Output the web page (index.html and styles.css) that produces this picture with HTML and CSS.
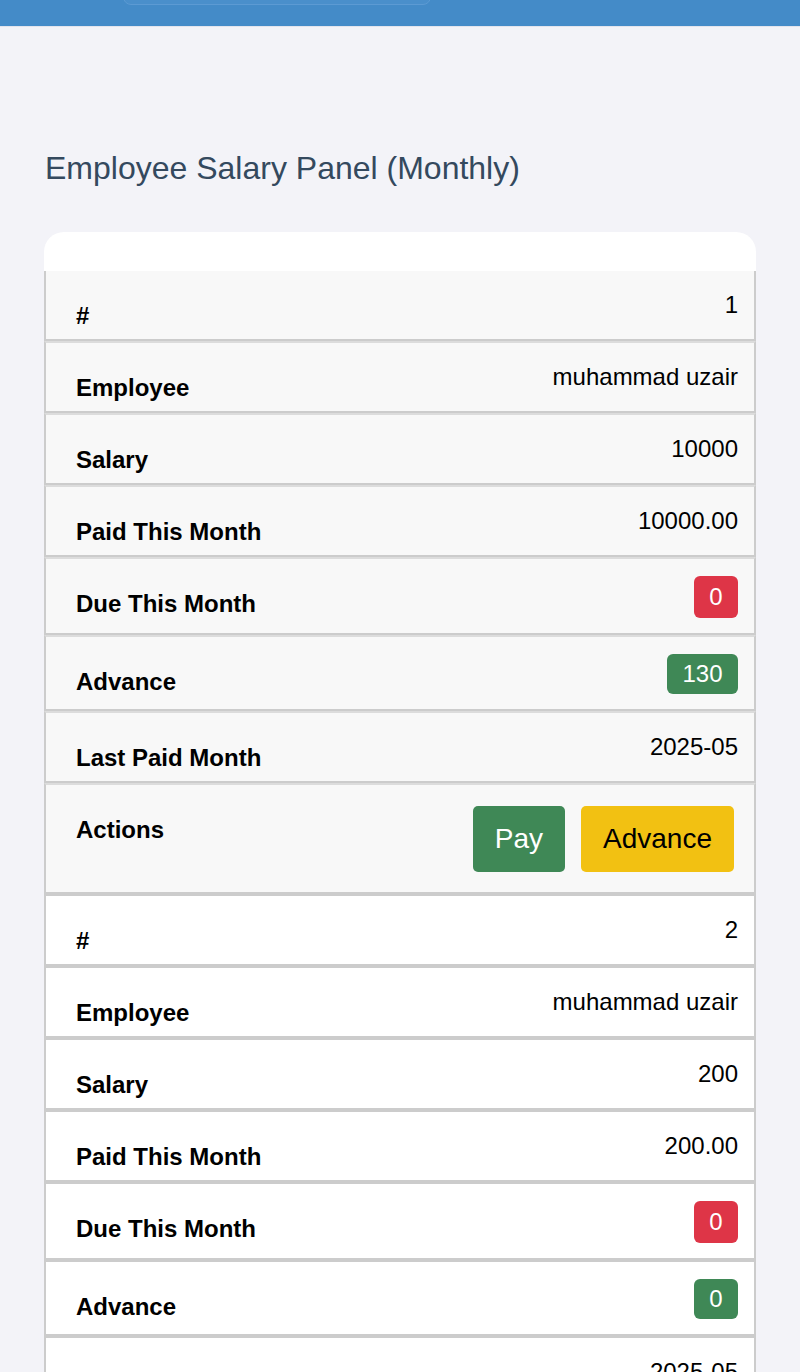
FILE: index.html
```html
<!DOCTYPE html>
<html lang="en">
<head>
<meta charset="utf-8">
<title>Employee Salary Panel</title>
<link rel="stylesheet" href="styles.css">
</head>
<body>
<header class="topbar">
  <div class="search"></div>
</header>
<main class="page">
  <h2 class="title">Employee Salary Panel (Monthly)</h2>
  <div class="card">
    <div class="card-head"></div>

    <div class="record odd">
      <div class="row"><span class="label">#</span><span class="value">1</span></div>
      <div class="row"><span class="label">Employee</span><span class="value">muhammad uzair</span></div>
      <div class="row"><span class="label">Salary</span><span class="value">10000</span></div>
      <div class="row"><span class="label">Paid This Month</span><span class="value">10000.00</span></div>
      <div class="row"><span class="label">Due This Month</span><span class="value"><span class="badge badge-red">0</span></span></div>
      <div class="row"><span class="label">Advance</span><span class="value"><span class="badge badge-green">130</span></span></div>
      <div class="row"><span class="label">Last Paid Month</span><span class="value">2025-05</span></div>
      <div class="row row-actions"><span class="label">Actions</span><span class="value actions"><button class="btn btn-pay">Pay</button><button class="btn btn-advance">Advance</button></span></div>
    </div>

    <div class="record even">
      <div class="row"><span class="label">#</span><span class="value">2</span></div>
      <div class="row"><span class="label">Employee</span><span class="value">muhammad uzair</span></div>
      <div class="row"><span class="label">Salary</span><span class="value">200</span></div>
      <div class="row"><span class="label">Paid This Month</span><span class="value">200.00</span></div>
      <div class="row"><span class="label">Due This Month</span><span class="value"><span class="badge badge-red">0</span></span></div>
      <div class="row"><span class="label">Advance</span><span class="value"><span class="badge badge-green">0</span></span></div>
      <div class="row"><span class="label">Last Paid Month</span><span class="value">2025-05</span></div>
      <div class="row row-actions"><span class="label">Actions</span><span class="value actions"><button class="btn btn-pay">Pay</button><button class="btn btn-advance">Advance</button></span></div>
    </div>
  </div>
</main>
</body>
</html>
```

FILE: styles.css
```css
html, body {
  margin: 0;
  padding: 0;
}

body {
  background: #f3f3f8;
  font-family: "Liberation Sans", Arial, sans-serif;
  color: #000;
}

.topbar {
  height: 26px;
  background: #448bc8;
  border-bottom: 1px solid #e2e4ed;
  overflow: hidden;
}

.search {
  width: 306px;
  height: 40px;
  margin: -37px 0 0 123px;
  border: 1px solid #5c9ad3;
  border-radius: 8px;
  background: #4a8fcb;
}

.page {
  padding: 0 44px;
}

.title {
  margin: 123px 0 45px 1px;
  font-size: 32px;
  line-height: 37px;
  font-weight: normal;
  color: #34495e;
}

.card {
  background: #fff;
  border-radius: 20px 20px 0 0;
}

.card-head {
  height: 39px;
}

.row {
  display: flex;
  justify-content: space-between;
  align-items: flex-start;
  padding: 16px 16px 16px 30px;
  border-left: 2px solid #ccc;
  border-right: 2px solid #ccc;
  border-bottom: 2px solid #ccc;
  font-size: 24px;
  line-height: 36px;
}

.odd .row {
  background: #f8f8f8;
}

.even .row {
  background: #fff;
}

.odd .row + .row {
  border-top: 2px solid #dcdcdc;
}

.even .row {
  border-top: 2px solid #ccc;
}

.label {
  font-weight: bold;
  margin-top: 11px;
  margin-bottom: -11px;
}

.value {
  text-align: right;
}

.badge {
  display: inline-block;
  padding: 0 15.5px;
  border-radius: 6px;
  color: #fff;
  vertical-align: top;
  margin-top: 1px;
  margin-bottom: -1px;
}

.badge-red {
  background: #de3547;
  line-height: 42px;
}

.badge-green {
  background: #3f8856;
  line-height: 40px;
}

.actions {
  display: flex;
  gap: 16px;
  padding: 5px 4px 4px 0;
}

.btn {
  font-family: "Liberation Sans", Arial, sans-serif;
  font-size: 28px;
  height: 66px;
  padding: 0 22px;
  border: none;
  border-radius: 5px;
  cursor: pointer;
}

.btn-pay {
  background: #3f8856;
  color: #fff;
}

.btn-advance {
  background: #f2c112;
  color: #000;
}
```
